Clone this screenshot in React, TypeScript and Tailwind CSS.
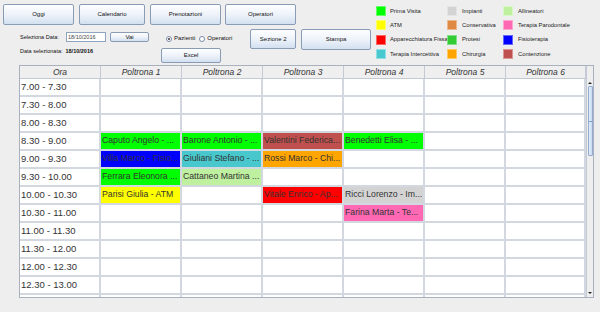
import React from "react";

const font = { fontFamily: '"Liberation Sans", Arial, sans-serif' };

const legend = [
  [
    { label: "Prima Visita", color: "bg-[#00ff00]" },
    { label: "ATM", color: "bg-[#ffff00]" },
    { label: "Apparecchiatura Fissa", color: "bg-[#ff0000]" },
    { label: "Terapia Intercettiva", color: "bg-[#48c9d0]" },
  ],
  [
    { label: "Impianti", color: "bg-[#d3d3d3]" },
    { label: "Conservativa", color: "bg-[#de8a44]" },
    { label: "Protesi", color: "bg-[#33cc33]" },
    { label: "Chirurgia", color: "bg-[#ffa500]" },
  ],
  [
    { label: "Allineatori", color: "bg-[#bff0a0]" },
    { label: "Terapia Parodontale", color: "bg-[#ff69b4]" },
    { label: "Fisioterapia", color: "bg-[#0000ff]" },
    { label: "Contenzione", color: "bg-[#c0504f]" },
  ],
];

// l'ultima riga si vede solo per pochi pixel, senza testo
const hours = [
  "7.00 - 7.30",
  "7.30 - 8.00",
  "8.00 - 8.30",
  "8.30 - 9.00",
  "9.00 - 9.30",
  "9.30 - 10.00",
  "10.00 - 10.30",
  "10.30 - 11.00",
  "11.00 - 11.30",
  "11.30 - 12.00",
  "12.00 - 12.30",
  "12.30 - 13.00",
  "",
];

type Slot = { text: string; color: string };

// riga -> poltrona -> appuntamento
const slots: Record<number, Record<number, Slot>> = {
  3: {
    0: { text: "Caputo Angelo - ...", color: "bg-[#00ff00]" },
    1: { text: "Barone Antonio - ...", color: "bg-[#00ff00]" },
    2: { text: "Valentini Federica...", color: "bg-[#c0504d]" },
    3: { text: "Benedetti Elisa - ...", color: "bg-[#00ff00]" },
  },
  4: {
    0: { text: "Villa Marco - Fisio...", color: "bg-[#0000ff]" },
    1: { text: "Giuliani Stefano - ...", color: "bg-[#48c8cc]" },
    2: { text: "Rossi Marco - Chi...", color: "bg-[#ffa500]" },
  },
  5: {
    0: { text: "Ferrara Eleonora ...", color: "bg-[#00ff00]" },
    1: { text: "Cattaneo Martina ...", color: "bg-[#bff0a0]" },
  },
  6: {
    0: { text: "Parisi Giulia - ATM", color: "bg-[#ffff00]" },
    2: { text: "Vitale Enrico - Ap...", color: "bg-[#ff0000]" },
    3: { text: "Ricci Lorenzo - Im...", color: "bg-[#d3d3d3]" },
  },
  7: {
    3: { text: "Farina Marta - Te...", color: "bg-[#ff69b4]" },
  },
};

function Btn({ label, className }: { label: string; className: string }) {
  return (
    <div
      className={`flex items-center justify-center border border-[#8a9bb6] rounded-[2px] bg-gradient-to-b from-[#fdfeff] via-[#eef3fa] to-[#d3e0f0] text-[6px] text-[#111] ${className}`}
    >
      {label}
    </div>
  );
}

function Radio({ checked, label }: { checked?: boolean; label: string }) {
  return (
    <div className="flex items-center gap-[2px]">
      <div className="w-[6px] h-[6px] rounded-full border border-[#7a8aa6] bg-white flex items-center justify-center">
        {checked && <div className="w-[2px] h-[2px] rounded-full bg-[#333]" />}
      </div>
      <span className="text-[6px] text-[#111]">{label}</span>
    </div>
  );
}

export default function App() {
  return (
    <div className="w-[600px] h-[312px] bg-[#eeeeee] overflow-hidden" style={font}>
      {/* barra superiore */}
      <div className="flex h-[65px] pt-[4px] pl-[3px]">
        <div className="w-[293px] flex flex-col">
          <div className="flex">
            <Btn label="Oggi" className="w-[71px] h-[21px]" />
            <Btn label="Calendario" className="w-[66px] h-[21px] ml-[5px]" />
            <Btn label="Prenotazioni" className="w-[71px] h-[21px] ml-[5px]" />
            <Btn label="Operatori" className="w-[71px] h-[21px] ml-[4px]" />
          </div>
          <div className="flex items-start">
            <div className="ml-[17px] mt-[7px] w-[129px] flex flex-col">
              <div className="flex items-center h-[10px]">
                <span className="w-[46px] text-[5.5px] text-[#111]">Seleziona Data:</span>
                <div className="w-[40px] h-[10px] border border-[#8ea5c2] bg-white text-[5.5px] text-[#444] flex items-center pl-[1px]">
                  18/10/2016
                </div>
                <Btn label="Vai" className="w-[39px] h-[10px] ml-[4px]" />
              </div>
              <div className="mt-[5px] text-[5.5px] text-[#111] flex gap-[3px]">
                <span>Data selezionata:</span>
                <span className="font-bold">18/10/2016</span>
              </div>
            </div>
            <div className="ml-[12px] flex flex-col">
              <div className="flex gap-[4px] mt-[9px] ml-[5px]">
                <Radio checked label="Pazienti" />
                <Radio label="Operatori" />
              </div>
              <Btn label="Excel" className="w-[60px] h-[15px] mt-[5px]" />
            </div>
            <Btn label="Sezione 2" className="w-[57px] h-[20px] ml-[18px] mt-[4px]" />
          </div>
        </div>
        <Btn label="Stampa" className="w-[70px] h-[21px] ml-[5px] mt-[25px]" />
        <div className="flex ml-[5px]">
          {legend.map((col, ci) => (
            <div
              key={ci}
              className={`flex flex-col ${ci === 0 ? "w-[71px]" : ci === 1 ? "w-[56px]" : "w-[90px]"}`}
            >
              {col.map((it) => (
                <div key={it.label} className="flex items-center h-[14.3px] overflow-hidden whitespace-nowrap">
                  <div className={`w-[10px] h-[10px] shrink-0 border border-white/40 ${it.color}`} />
                  <span className={`text-[5.8px] text-[#222] ${ci === 0 ? "ml-[4px]" : "ml-[5px]"}`}>
                    {it.label}
                  </span>
                </div>
              ))}
            </div>
          ))}
        </div>
      </div>

      {/* tabella */}
      <div className="ml-[19px] w-[575px] h-[233px] border border-[#a9b1bf] bg-white flex overflow-hidden">
        <div className="w-[566px] flex flex-col overflow-hidden">
          <div className="flex h-[13px] shrink-0 bg-[#efefef] border-b border-[#c3cad5]">
            {["Ora", "Poltrona 1", "Poltrona 2", "Poltrona 3", "Poltrona 4", "Poltrona 5", "Poltrona 6"].map(
              (h, i) => (
                <div
                  key={h}
                  className={`${i === 6 ? "w-[80px]" : "w-[81px]"} border-r border-[#c3cad5] flex items-center justify-center italic text-[8.5px] text-[#333]`}
                >
                  {h}
                </div>
              )
            )}
          </div>
          {hours.map((h, r) => (
            <div key={r} className="flex h-[18px] shrink-0 border-b-2 border-[#d3d8e0]">
              <div className="w-[81px] border-r-2 border-[#d3d8e0] flex items-center pl-[1px] text-[9.5px] text-[#333] whitespace-nowrap">
                {h}
              </div>
              {[0, 1, 2, 3, 4, 5].map((c) => {
                const s = slots[r]?.[c];
                return (
                  <div
                    key={c}
                    className={`${c === 5 ? "w-[80px]" : "w-[81px]"} border-r-2 border-[#d3d8e0] flex items-center pl-[1px] text-[8.7px] text-[#333] whitespace-nowrap overflow-hidden ${s ? s.color : ""}`}
                  >
                    {s?.text}
                  </div>
                );
              })}
            </div>
          ))}
        </div>
        {/* barra di scorrimento */}
        <div className="w-[7px] flex flex-col bg-[#eeeeee] border-l border-[#c3cad5]">
          <div className="h-[13px] shrink-0" />
          <div className="h-[7px] shrink-0 flex items-center justify-center">
            <div className="w-0 h-0 border-l-[2px] border-r-[2px] border-b-[2px] border-l-transparent border-r-transparent border-b-[#222]" />
          </div>
          <div className="h-[70px] shrink-0 mx-[0.5px] rounded-[1px] border border-[#93acd0] bg-gradient-to-r from-[#e4eefa] to-[#c7daf2] flex items-center justify-center">
            <div className="w-[3px] h-[1px] bg-[#7f9cc8]" />
          </div>
          <div className="flex-1" />
          <div className="h-[7px] shrink-0 flex items-center justify-center mb-[1px]">
            <div className="w-0 h-0 border-l-[2px] border-r-[2px] border-t-[2px] border-l-transparent border-r-transparent border-t-[#222]" />
          </div>
        </div>
      </div>
    </div>
  );
}
